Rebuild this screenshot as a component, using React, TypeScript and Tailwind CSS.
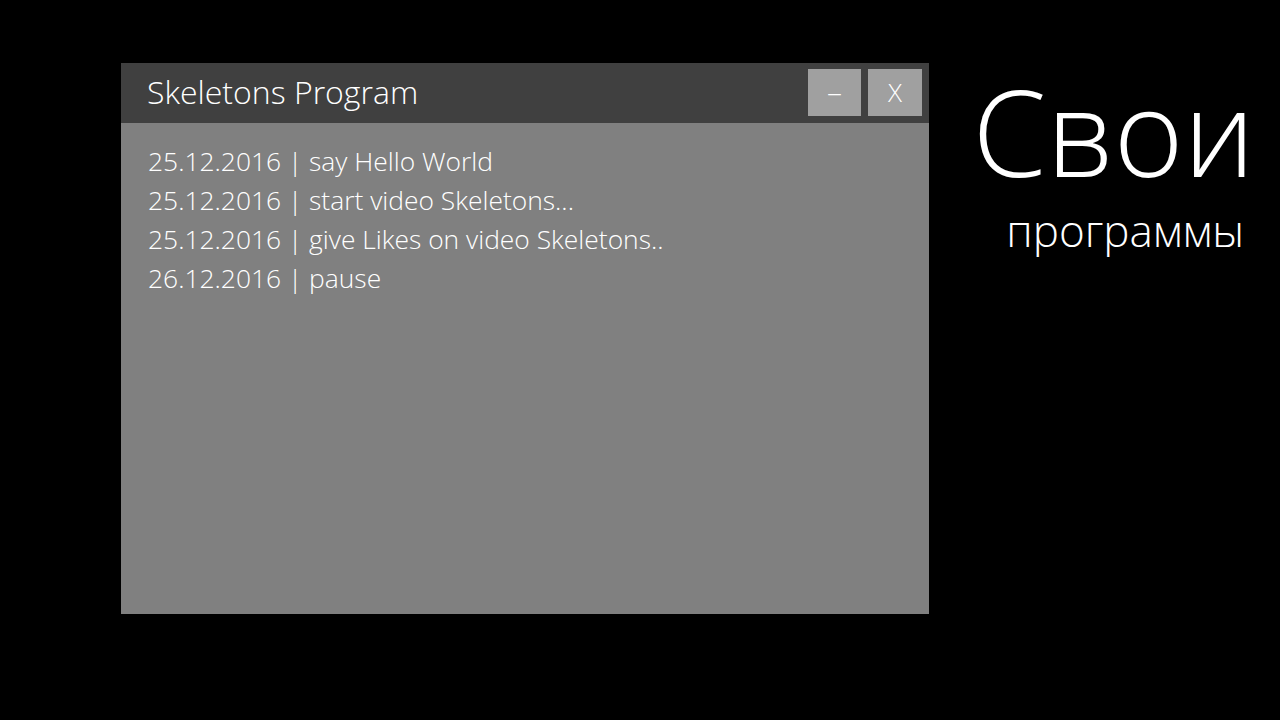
const logs = [
  "25.12.2016 | say Hello World",
  "25.12.2016 | start video Skeletons...",
  "25.12.2016 | give Likes on video Skeletons..",
  "26.12.2016 | pause",
];

const App = () => {
  return (
    <div className="w-[1280px] h-[720px] bg-black flex font-['Open_Sans',sans-serif] font-light text-white">
      {/* window */}
      <div className="ml-[121px] mt-[63px] w-[808px] h-[551px] bg-[#808080] flex flex-col">
        <div className="h-[60px] bg-[#404040] flex items-center pl-[26px] pr-[7px]">
          <div className="text-[32px] leading-none flex-1 -mt-[3px]">Skeletons Program</div>
          <div className="flex gap-[7px] self-start mt-[6px]">
            <div className="w-[53px] h-[47px] bg-[#a0a0a0] flex items-center justify-center text-[30px] leading-none pb-[2px]">
              –
            </div>
            <div className="w-[54px] h-[47px] bg-[#a0a0a0] flex items-center justify-center text-[26px] leading-none pb-[1px]">
              X
            </div>
          </div>
        </div>
        <div className="pl-[27px] pt-[19px] flex flex-col">
          {logs.map((l) => (
            <div key={l} className="text-[26.4px] leading-[39px]">
              {l}
            </div>
          ))}
        </div>
      </div>
      {/* caption */}
      <div className="flex-1 pt-[72px] pr-[25px] flex flex-col items-end">
        <div className="text-[119px] leading-none">Свои</div>
        <div className="text-[44px] leading-none mt-[17px] mr-[11px]">программы</div>
      </div>
    </div>
  );
};

export default App;
